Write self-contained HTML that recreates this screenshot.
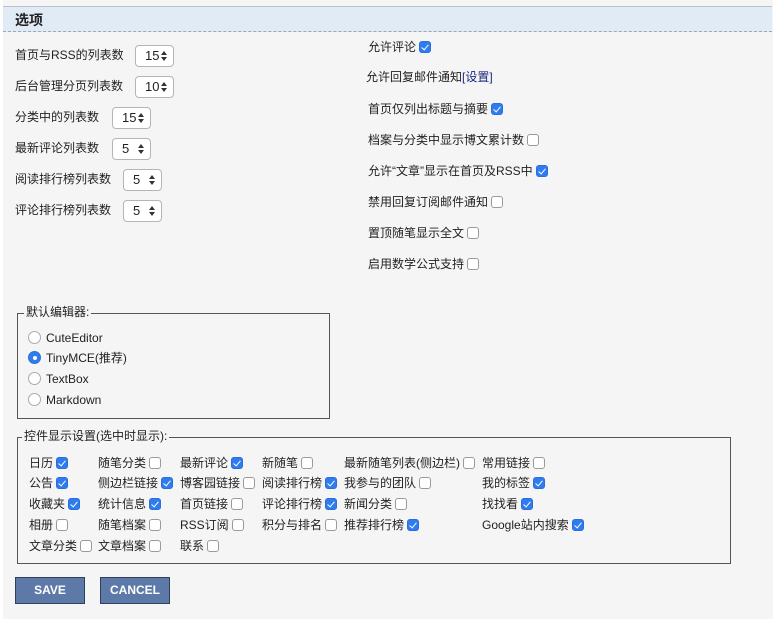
<!DOCTYPE html>
<html><head><meta charset="utf-8"><style>
*{box-sizing:border-box}
body{margin:0;width:773px;height:619px;background:#fff;font-family:"Liberation Sans","Noto Sans CJK SC",sans-serif;font-size:12px;color:#222;position:relative;overflow:hidden}
#pg{position:absolute;left:3px;top:0;width:770px;height:619px;background:#f5f5f5}
#hd{position:absolute;left:3px;top:6px;width:769px;height:26px;background:#e1ebf5;border-top:1px solid #b9c0c8;border-bottom:1px dashed #9aa8b8;font-size:14px;font-weight:bold;padding:3px 0 0 12px;color:#222}
.a{position:absolute;white-space:nowrap;line-height:16px}
.sel{position:absolute;height:22px;background:#fff;border:1px solid #b5b5b5;border-radius:4px;padding:0 0 0 9px;font-size:13px;line-height:20px}
.sel:after{content:"";position:absolute;right:6px;top:5px;border-left:3px solid transparent;border-right:3px solid transparent;border-bottom:4px solid #333}
.sel:before{content:"";position:absolute;right:6px;top:11px;border-left:3px solid transparent;border-right:3px solid transparent;border-top:4px solid #333}
.cb{display:inline-block;width:12px;height:12px;border:1px solid #9a9a9a;border-radius:3px;background:#fff;vertical-align:-2px;margin-left:3px;position:relative}
.cb.on{background:#2f7cf0;border-color:#2a6fd8}
.cb.on:after{content:"";position:absolute;left:3px;top:1px;width:3px;height:6px;border:solid #fff;border-width:0 1.5px 1.5px 0;transform:rotate(40deg)}
.fs{position:absolute;border:1px solid #555}
.lg{position:absolute;background:#f5f5f5;padding:0 2px;line-height:14px}
.rd{display:inline-block;width:13px;height:13px;border:1px solid #aaa;border-radius:50%;background:#fff;vertical-align:-2px;margin-right:5px;position:relative}
.rd.on{background:#2f7cf0;border-color:#2a6fd8}
.rd.on:after{content:"";position:absolute;left:3.5px;top:3.5px;width:4px;height:4px;border-radius:50%;background:#fff}
.btn{position:absolute;top:577px;height:27px;background:#5d79a8;border:1px solid #2f3f5c;color:#fff;font-weight:bold;font-size:12px;text-align:center;line-height:25px}
</style></head><body>
<div id="pg"></div>
<div id="hd">选项</div>
<div class="a" style="left:15px;top:47px">首页与RSS的列表数</div><div class="sel" style="left:135px;top:45px;width:39px">15</div>
<div class="a" style="left:15px;top:78px">后台管理分页列表数</div><div class="sel" style="left:135px;top:76px;width:39px">10</div>
<div class="a" style="left:15px;top:109px">分类中的列表数</div><div class="sel" style="left:112px;top:107px;width:39px">15</div>
<div class="a" style="left:15px;top:140px">最新评论列表数</div><div class="sel" style="left:112px;top:138px;width:39px">5</div>
<div class="a" style="left:15px;top:171px">阅读排行榜列表数</div><div class="sel" style="left:123px;top:169px;width:39px">5</div>
<div class="a" style="left:15px;top:202px">评论排行榜列表数</div><div class="sel" style="left:123px;top:200px;width:39px">5</div>

<div class="a" style="left:368px;top:39px">允许评论<span class="cb on"></span></div>
<div class="a" style="left:366px;top:69px">允许回复邮件通知<span style="color:#1a2a80">[设置]</span></div>
<div class="a" style="left:368px;top:101px">首页仅列出标题与摘要<span class="cb on"></span></div>
<div class="a" style="left:368px;top:132px">档案与分类中显示博文累计数<span class="cb"></span></div>
<div class="a" style="left:368px;top:163px">允许“文章”显示在首页及RSS中<span class="cb on"></span></div>
<div class="a" style="left:368px;top:194px">禁用回复订阅邮件通知<span class="cb"></span></div>
<div class="a" style="left:368px;top:225px">置顶随笔显示全文<span class="cb"></span></div>
<div class="a" style="left:368px;top:256px">启用数学公式支持<span class="cb"></span></div>

<div class="fs" style="left:17px;top:313px;width:313px;height:106px"></div>
<div class="lg" style="left:24px;top:305px">默认编辑器:</div>
<div class="a" style="left:28px;top:330px"><span class="rd"></span>CuteEditor</div>
<div class="a" style="left:28px;top:350px"><span class="rd on"></span>TinyMCE(推荐)</div>
<div class="a" style="left:28px;top:371px"><span class="rd"></span>TextBox</div>
<div class="a" style="left:28px;top:392px"><span class="rd"></span>Markdown</div>

<div class="fs" style="left:17px;top:437px;width:714px;height:127px"></div>
<div class="lg" style="left:22px;top:429px">控件显示设置(选中时显示):</div>

<div class="a" style="left:29px;top:455px">日历<span class="cb on"></span></div>
<div class="a" style="left:98px;top:455px">随笔分类<span class="cb"></span></div>
<div class="a" style="left:180px;top:455px">最新评论<span class="cb on"></span></div>
<div class="a" style="left:262px;top:455px">新随笔<span class="cb"></span></div>
<div class="a" style="left:344px;top:455px">最新随笔列表(侧边栏)<span class="cb"></span></div>
<div class="a" style="left:482px;top:455px">常用链接<span class="cb"></span></div>

<div class="a" style="left:29px;top:475px">公告<span class="cb on"></span></div>
<div class="a" style="left:98px;top:475px">侧边栏链接<span class="cb on"></span></div>
<div class="a" style="left:180px;top:475px">博客园链接<span class="cb"></span></div>
<div class="a" style="left:262px;top:475px">阅读排行榜<span class="cb on"></span></div>
<div class="a" style="left:344px;top:475px">我参与的团队<span class="cb"></span></div>
<div class="a" style="left:482px;top:475px">我的标签<span class="cb on"></span></div>

<div class="a" style="left:29px;top:496px">收藏夹<span class="cb on"></span></div>
<div class="a" style="left:98px;top:496px">统计信息<span class="cb on"></span></div>
<div class="a" style="left:180px;top:496px">首页链接<span class="cb"></span></div>
<div class="a" style="left:262px;top:496px">评论排行榜<span class="cb on"></span></div>
<div class="a" style="left:344px;top:496px">新闻分类<span class="cb"></span></div>
<div class="a" style="left:482px;top:496px">找找看<span class="cb on"></span></div>

<div class="a" style="left:29px;top:517px">相册<span class="cb"></span></div>
<div class="a" style="left:98px;top:517px">随笔档案<span class="cb"></span></div>
<div class="a" style="left:180px;top:517px">RSS订阅<span class="cb"></span></div>
<div class="a" style="left:262px;top:517px">积分与排名<span class="cb"></span></div>
<div class="a" style="left:344px;top:517px">推荐排行榜<span class="cb on"></span></div>
<div class="a" style="left:482px;top:517px">Google站内搜索<span class="cb on"></span></div>

<div class="a" style="left:29px;top:538px">文章分类<span class="cb"></span></div>
<div class="a" style="left:98px;top:538px">文章档案<span class="cb"></span></div>
<div class="a" style="left:180px;top:538px">联系<span class="cb"></span></div>

<div class="btn" style="left:15px;width:70px">SAVE</div>
<div class="btn" style="left:100px;width:70px">CANCEL</div>
</body></html>
